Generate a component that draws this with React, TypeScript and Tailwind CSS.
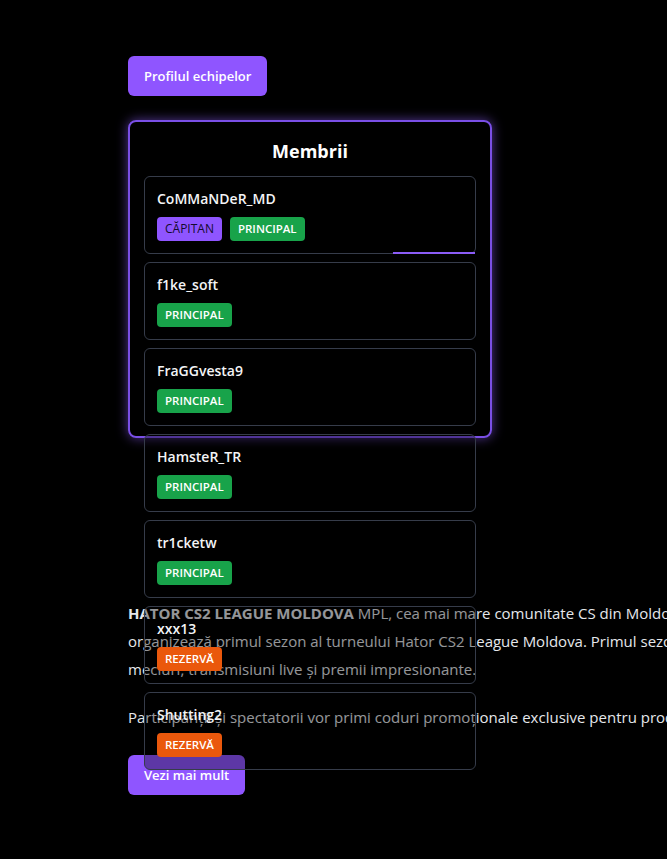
import React from 'react';

interface Member {
  name: string;
  roles: ('captain' | 'main' | 'reserve')[];
}

const members: Member[] = [
  { name: 'CoMMaNDeR_MD', roles: ['captain', 'main'] },
  { name: 'f1ke_soft', roles: ['main'] },
  { name: 'FraGGvesta9', roles: ['main'] },
  { name: 'HamsteR_TR', roles: ['main'] },
  { name: 'tr1cketw', roles: ['main'] },
  { name: 'xxx13', roles: ['reserve'] },
  { name: 'Shutting2', roles: ['reserve'] },
];

const RoleBadge: React.FC<{ role: 'captain' | 'main' | 'reserve' }> = ({ role }) => {
  if (role === 'captain') {
    return <span className="rounded bg-[#8f55ff] px-2 py-1 text-xs font-medium leading-4 text-[#140a2e]">CĂPITAN</span>;
  }
  if (role === 'main') {
    return <span className="rounded bg-[#18a34a] px-2 py-1 text-[11.5px] font-semibold leading-4 text-white">PRINCIPAL</span>;
  }
  return <span className="rounded bg-[#ea580c] px-2 py-1 text-[11.5px] font-semibold leading-4 text-white">REZERVĂ</span>;
};

const App: React.FC = () => {
  return (
    <div
      className="min-h-[859px] w-full overflow-hidden bg-black px-32 pt-14 text-white"
      style={{ fontFamily: '"Open Sans", "Noto Sans", sans-serif' }}
    >
      <button type="button" className="rounded-md bg-[#8f55ff] px-4 py-2.5 text-[13px] font-semibold leading-5 text-white">
        Profilul echipelor
      </button>

      {/* members box has a fixed height, the list runs out of it */}
      <div className="mt-6 h-[318px] w-[364px] rounded-lg border-2 border-[#7a4fe6] px-[14px] pt-[15px] shadow-[0_0_12px_rgba(139,92,246,0.6)]">
        <h2 className="mb-[11px] text-center text-lg font-bold leading-7 text-white">Membrii</h2>
        <div className="flex flex-col gap-2">
          {members.map((m, i) => (
            <div key={m.name} className="relative flex flex-col gap-2 rounded-md border border-[#363c4a] bg-black/35 p-3">
              <span className="text-sm font-semibold leading-5 text-[#f3f4f6]">{m.name}</span>
              <div className="flex gap-2">
                {m.roles.map((r) => (
                  <RoleBadge key={r} role={r} />
                ))}
              </div>
              {i === 0 && <div className="absolute bottom-[-1px] right-0 h-[2px] w-[82px] bg-[#8b5cf6]" />}
            </div>
          ))}
        </div>
      </div>

      <div className="mt-[161px] whitespace-nowrap text-[15px] leading-7 text-[#e5e7eb]">
        <p className="mb-5">
          <span className="font-bold">HATOR CS2 LEAGUE MOLDOVA</span> MPL, cea mai mare comunitate CS din Moldova, anunță cu mândrie că
          <br />
          organizează primul sezon al turneului Hator CS2 League Moldova. Primul sezon va aduce echipe puternice,
          <br />
          meciuri, transmisiuni live și premii impresionante.
        </p>
        <p>Participanții și spectatorii vor primi coduri promoționale exclusive pentru produsele HATOR.</p>
      </div>

      <button type="button" className="mt-6 rounded-md bg-[#8f55ff] px-4 py-2.5 text-[13px] font-semibold leading-5 text-white">
        Vezi mai mult
      </button>
    </div>
  );
};

export default App;
